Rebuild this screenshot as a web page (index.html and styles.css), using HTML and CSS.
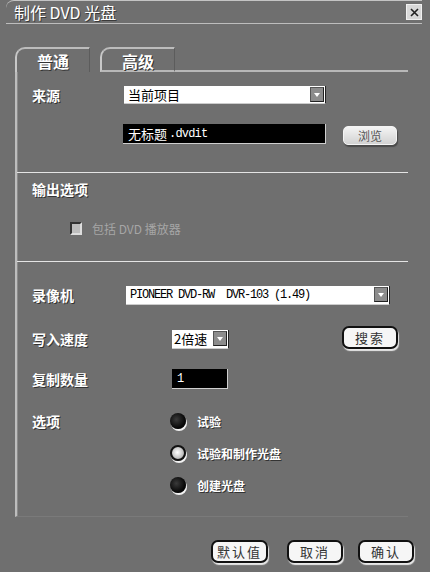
FILE: index.html
```html
<!DOCTYPE html>
<html lang="zh-CN">
<head>
    <meta charset="UTF-8">
    <meta name="viewport" content="width=device-width, initial-scale=1.0">
    <title>制作 DVD 光盘</title>
    <link rel="stylesheet" href="styles.css">
</head>
<body>
    <div class="dialog">
        <!-- Barra de título -->
        <div class="titlebar">
            <span class="title">制作 DVD 光盘</span>
            <span class="close">
                <svg width="13" height="13" viewBox="0 0 13 13">
                    <path d="M3 3 L10 10 M10 3 L3 10" stroke="#222" stroke-width="1.6" fill="none"/>
                </svg>
            </span>
        </div>

        <!-- Pestañas -->
        <div class="tabs">
            <div class="tab active">普通</div>
            <div class="tab-gap"></div>
            <div class="tab">高级</div>
            <div class="tab-rest"></div>
        </div>

        <div class="panel">
            <!-- Origen -->
            <div class="section source">
                <div class="row">
                    <span class="label w92">来源</span>
                    <div class="select src">当前项目<span class="arrow"></span></div>
                </div>
                <div class="row row-file">
                    <div class="field file">无标题<span class="mono">.dvdit</span></div>
                    <button class="browse">浏览</button>
                </div>
            </div>

            <!-- Opciones de salida -->
            <div class="section output">
                <div class="row">
                    <span class="label">输出选项</span>
                </div>
                <div class="row row-check">
                    <span class="checkbox"></span>
                    <span class="disabled">包括 DVD 播放器</span>
                </div>
            </div>

            <!-- Grabadora -->
            <div class="section recorder">
                <div class="row">
                    <span class="label w94">录像机</span>
                    <div class="select drive"><span class="mono">PIONEER DVD-RW  DVR-103 (1.49)</span><span class="arrow"></span></div>
                </div>
                <div class="row row-speed">
                    <span class="label w140">写入速度</span>
                    <div class="select speed">2倍速<span class="arrow"></span></div>
                    <button class="btn search">搜索</button>
                </div>
                <div class="row row-copies">
                    <span class="label w140">复制数量</span>
                    <div class="field copies">1</div>
                </div>
                <div class="options">
                    <span class="label w138">选项</span>
                    <div class="radios">
                        <div class="radio-item"><span class="radio dark"></span>试验</div>
                        <div class="radio-item"><span class="radio light"></span>试验和制作光盘</div>
                        <div class="radio-item"><span class="radio dark"></span>创建光盘</div>
                    </div>
                </div>
            </div>
        </div>

        <!-- Botones -->
        <div class="footer">
            <button class="btn b-default">默认值</button>
            <button class="btn b-cancel">取消</button>
            <button class="btn b-ok">确认</button>
        </div>
    </div>
</body>
</html>
```

FILE: styles.css
```css
body {
    margin: 0;
    background-color: #6f6f6f;
    font-family: "Noto Sans CJK SC", "Noto Sans", sans-serif;
    color: #fff;
    width: 430px;
    height: 572px;
    overflow: hidden;
}

.dialog {
    height: 572px;
    display: flex;
    flex-direction: column;
}

/* Barra de título */
.titlebar {
    height: 22px;
    margin: 0 8px 0 6px;
    padding-left: 8px;
    border-top: 1px solid #c4c4c4;
    border-bottom: 1px solid #bdbdbd;
    border-top-left-radius: 8px;
    display: flex;
    align-items: center;
    justify-content: space-between;
}

.title {
    font-size: 16px;
    text-shadow: 1px 1px 0 #3a3a3a;
}

.close {
    width: 14px;
    height: 14px;
    background-color: #d8d8d8;
    border: 1px solid #f0f0f0;
    display: flex;
    align-items: center;
    justify-content: center;
}

/* Pestañas */
.tabs {
    display: flex;
    align-items: flex-end;
    height: 26px;
    margin: 22px 22px 0 15px;
}

.tab {
    width: 72px;
    height: 23px;
    border-top: 2px solid #bcbcbc;
    border-left: 2px solid #c8c8c8;
    border-right: 1px solid #5c5c5c;
    border-top-left-radius: 10px;
    font-size: 16px;
    font-weight: bold;
    text-align: center;
    line-height: 24px;
    text-shadow: 1px 1px 0 #333;
}

.tab:not(.active) {
    height: 21px;
    border-bottom: 2px solid #b8b8b8;
}

.tab-gap {
    width: 10px;
}

.tab-rest {
    flex: 1;
    border-bottom: 2px solid #b8b8b8;
}

/* Panel */
.panel {
    margin: 0 22px 0 15px;
    border-left: 2px solid #bdbdbd;
    box-shadow: inset 1px 0 0 #8a8a8a;
    border-bottom: 1px solid #7a7a7a;
}

.section {
    padding-left: 15px;
}

.source {
    padding-top: 12px;
    padding-bottom: 26px;
    border-bottom: 1px solid #e4e4e4;
}

.output {
    padding-top: 5px;
    padding-bottom: 23px;
    border-bottom: 1px solid #e4e4e4;
}

.recorder {
    padding-top: 22px;
    padding-bottom: 20px;
}

.row {
    display: flex;
    align-items: center;
    height: 22px;
}

.row-file {
    height: 24px;
    margin-top: 16px;
}

.row-check {
    height: 20px;
    margin-top: 18px;
}

.row-speed {
    margin-top: 22px;
}

.row-copies {
    margin-top: 18px;
}

.label {
    font-size: 14px;
    font-weight: bold;
    text-shadow: 1px 1px 0 #333;
    flex-shrink: 0;
}

.w92 { width: 92px; }
.w94 { width: 94px; }
.w138 { width: 138px; }
.w140 { width: 140px; }

/* Controles */
.select {
    box-sizing: border-box;
    height: 18px;
    background-color: #fff;
    color: #000;
    font-size: 13px;
    display: flex;
    align-items: center;
    padding-left: 4px;
    border-right: 1px solid #222;
    border-bottom: 1px solid #ccc;
}

.select .arrow {
    margin-left: auto;
    margin-right: 1px;
}

.src {
    width: 202px;
}

.drive {
    width: 264px;
    height: 19px;
}

.speed {
    width: 57px;
    height: 19px;
    padding-left: 2px;
}

.arrow {
    box-sizing: border-box;
    width: 14px;
    height: 15px;
    background-color: #8c8c8c;
    border: 1px solid #222;
    border-top-color: #555;
    border-left-color: #555;
    display: flex;
    align-items: center;
    justify-content: center;
    flex-shrink: 0;
}

.arrow::after {
    content: "";
    border-left: 3px solid transparent;
    border-right: 3px solid transparent;
    border-top: 4px solid #fff;
}

.mono {
    font-family: "Liberation Mono", monospace;
    font-size: 12px;
    letter-spacing: -1.2px;
    white-space: pre;
}

.file .mono {
    letter-spacing: -0.8px;
    margin-left: 2px;
}

.field {
    box-sizing: border-box;
    background-color: #000;
    color: #fff;
    font-size: 13px;
    display: flex;
    align-items: center;
    border-right: 1px solid #cfcfcf;
    border-bottom: 1px solid #cfcfcf;
}

.file {
    width: 203px;
    height: 20px;
    margin-left: 91px;
    padding-left: 5px;
}

.copies {
    width: 56px;
    height: 20px;
    padding-left: 5px;
    font-family: "Liberation Mono", monospace;
    font-size: 12px;
}

.browse {
    width: 54px;
    height: 19px;
    margin-left: 17px;
    margin-top: 3px;
    padding: 0;
    border: 1px solid #f4f4f4;
    border-radius: 5px;
    background: linear-gradient(#f4f4f4, #d2d2d2);
    box-shadow: 1px 2px 1px #4a4a4a;
    color: #555;
    font-family: "Noto Sans CJK SC", sans-serif;
    font-size: 12px;
}

.btn {
    box-sizing: border-box;
    height: 23px;
    padding: 0;
    background-color: #f6f6f6;
    border: 2px solid #111;
    border-radius: 7px;
    box-shadow: 1px 2px 1px #e8e8e8;
    color: #333;
    font-family: "Noto Sans CJK SC", sans-serif;
    font-size: 13px;
    letter-spacing: 2px;
}

.search {
    width: 56px;
    margin-left: 113px;
    margin-top: -4px;
}

.checkbox {
    box-sizing: border-box;
    width: 12px;
    height: 13px;
    margin-left: 38px;
    border: 2px solid #333;
    border-right-color: #ddd;
    border-bottom-color: #ddd;
    background-color: #bdbdbd;
}

.disabled {
    margin-left: 10px;
    font-size: 12px;
    color: #a6a6a6;
}

/* Opciones */
.options {
    display: flex;
    align-items: flex-start;
    margin-top: 20px;
}

.options .label {
    line-height: 22px;
}

.radios {
    display: flex;
    flex-direction: column;
    gap: 10px;
}

.radio-item {
    height: 22px;
    display: flex;
    align-items: center;
    font-size: 12px;
    font-weight: bold;
    text-shadow: 1px 1px 0 #333;
}

.radio {
    box-sizing: border-box;
    width: 16px;
    height: 16px;
    margin-right: 11px;
    border-radius: 50%;
    box-shadow: 1px 2px 0 #f2f2f2;
}

.radio.dark {
    background: radial-gradient(circle at 40% 40%, #3a3a3a, #050505 65%);
}

.radio.light {
    border: 2px solid #111;
    background: radial-gradient(circle at 45% 45%, #fff, #b8b8b8 70%);
}

/* Pie */
.footer {
    display: flex;
    justify-content: flex-end;
    padding-right: 16px;
    margin-top: 23px;
}

.b-default {
    width: 57px;
}

.b-cancel {
    width: 56px;
    margin-left: 19px;
}

.b-ok {
    width: 56px;
    margin-left: 15px;
}
```
